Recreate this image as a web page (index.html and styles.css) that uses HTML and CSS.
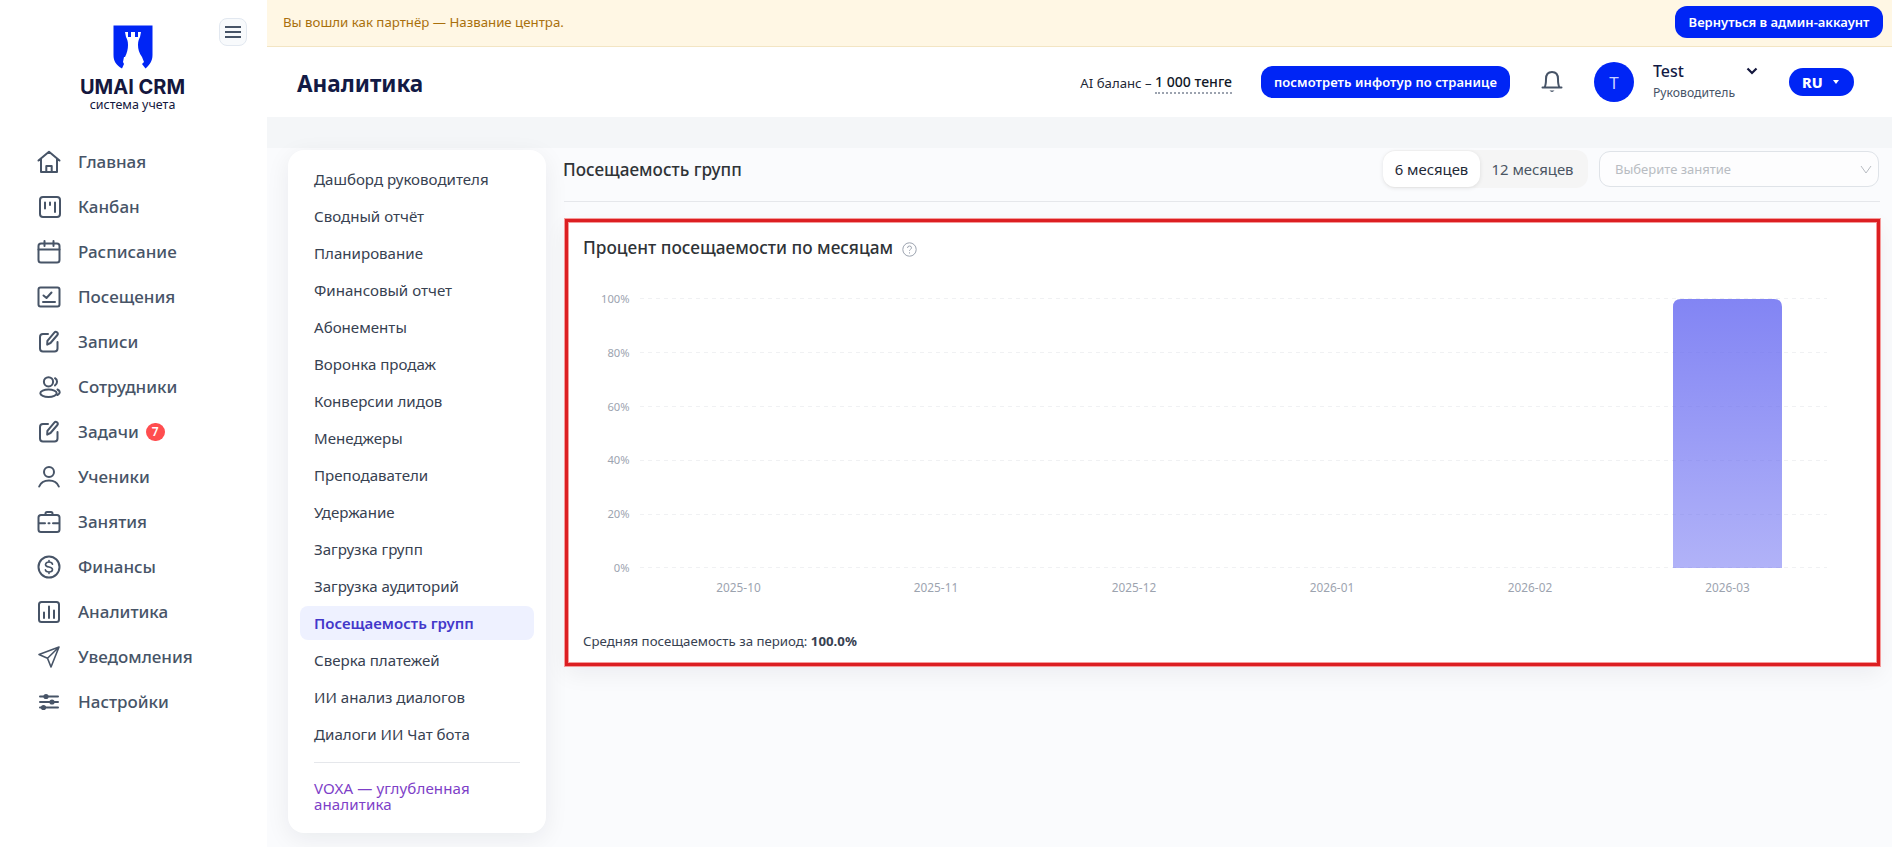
FILE: index.html
```html
<!DOCTYPE html>
<html lang="ru">
<head>
  <meta charset="UTF-8" />
  <meta name="viewport" content="width=device-width, initial-scale=1.0" />
  <title>Аналитика — UMAI CRM</title>
  <link rel="stylesheet" href="styles.css">
</head>
<body>
  <aside class="sidebar">
    <button class="burger" aria-label="Меню">
      <svg width="18" height="14" viewBox="0 0 18 14"><path d="M1 2h16M1 7h16M1 12h16"/></svg>
    </button>
    <div class="logo">
      <svg width="40" height="44" viewBox="0 0 40 44">
        <path fill="#0025f5" d="M0.500 0.500h39V30c0 6-3 10-7 13.500L29 39l2-2-2-5c-3-4-4-8-4-12 0-4 1-6 2-8l1-5h-3v5h-3V7h-4v5h-3V7h-3l1 5c1 2 2 4 2 8 0 4-1 8-3 12l-1 0-1 5 1 2-2 4.500C3 40 .5 36 .5 30z"/>
      </svg>
      <div class="logo-name">UMAI CRM</div>
      <div class="logo-sub">система учета</div>
    </div>
    <nav class="menu">
      <a href="#"><svg viewBox="0 0 24 24"><path d="M1.500 10.500 12 1.800l10.500 8.700M4 9v13h16V9M9.300 22v-6h5.400v6"/></svg>Главная</a>
      <a href="#"><svg viewBox="0 0 24 24"><rect x="3" y="2" width="20" height="20" rx="3"/><path d="M8 7.500v6M13 7.500v2.500M18 7.500v9.500"/></svg>Канбан</a>
      <a href="#"><svg viewBox="0 0 24 24"><rect x="1.500" y="3.500" width="21" height="19" rx="2.500"/><path d="M1.500 9.500h21M7.500 1v5M16.500 1v5"/></svg>Расписание</a>
      <a href="#"><svg viewBox="0 0 24 24"><rect x="1.500" y="2.500" width="21" height="19" rx="2"/><path d="m6.500 10.500 3 2.500 5-5.500M6 17h12"/></svg>Посещения</a>
      <a href="#"><svg viewBox="0 0 24 24"><path d="M11 4H6Q3 4 3 7v11.500q0 3 3 3h11.500q3 0 3-3V12M17.300 2.600q1.200-1.400 2.700-.3 1.400 1.200.4 2.700L13.500 13l-3.300 1.600.2-3.800z"/></svg>Записи</a>
      <a href="#"><svg viewBox="0 0 24 24"><circle cx="11.500" cy="6.800" r="4.600"/><ellipse cx="11.500" cy="18.200" rx="8.200" ry="3.700"/><path d="M18 3.200a4.200 4.200 0 0 1 0 7.200M20.500 14.500c3 1.500 3 4 0 5.500"/></svg>Сотрудники</a>
      <a href="#"><svg viewBox="0 0 24 24"><path d="M11 4H6Q3 4 3 7v11.500q0 3 3 3h11.500q3 0 3-3V12M17.300 2.600q1.200-1.400 2.700-.3 1.400 1.200.4 2.700L13.500 13l-3.300 1.600.2-3.800z"/></svg>Задачи<span class="badge">7</span></a>
      <a href="#"><svg viewBox="0 0 24 24"><circle cx="12" cy="7" r="5"/><path d="M2.200 21.500q2.300-6 9.800-6t9.800 6"/></svg>Ученики</a>
      <a href="#"><svg viewBox="0 0 24 24"><rect x="1.500" y="5" width="21" height="17" rx="2.500"/><path d="M8.500 5V3.500q0-1.500 1.500-1.500h4q1.500 0 1.500 1.500V5M2 13.200h6M11.500 13.200h1M16 13.200h6"/></svg>Занятия</a>
      <a href="#"><svg viewBox="0 0 24 24"><circle cx="12" cy="12" r="10.500"/><path class="thin" d="M15.500 9.200q-.5-2.200-3.500-2.200T8.500 9.400q0 2 3.500 2.600t3.500 2.600q0 2.400-3.500 2.400t-3.600-2.200M12 5.500V7M12 17v1.500"/></svg>Финансы</a>
      <a href="#"><svg viewBox="0 0 24 24"><rect x="2" y="2" width="20" height="20" rx="2.500"/><path d="M7 12.500V18M12 6.500V18M17 10.500V18"/></svg>Аналитика</a>
      <a href="#"><svg viewBox="0 0 24 24"><path class="thin" d="M22 2 2 9.500l8.500 3.800L14 22zM22 2 10.500 13.300"/></svg>Уведомления</a>
      <a href="#"><svg viewBox="0 0 24 24"><path d="M3 6.500h18M3 12h18M3 17.500h18"/><g class="dots"><circle cx="9" cy="6.500" r="2.600"/><circle cx="15" cy="12" r="2.600"/><circle cx="6.500" cy="17.500" r="2.600"/></g></svg>Настройки</a>
    </nav>
  </aside>

  <div class="main">
    <div class="partner-bar">
      <span>Вы вошли как партнёр — Название центра.</span>
      <button class="btn">Вернуться в админ-аккаунт</button>
    </div>

    <header class="topbar">
      <h1>Аналитика</h1>
      <div class="balance">AI баланс – <span>1 000 тенге</span></div>
      <button class="btn tour">посмотреть инфотур по странице</button>
      <svg class="bell" width="22" height="24" viewBox="0 0 22 24"><path d="M1.500 17.500h19M3.500 17.500Q5 15 5 9q0-7 6-7t6 7q0 6 1.500 8.500"/><path d="M8.500 20.500q2.500 2.800 5 0z" fill="#475467" stroke="none"/></svg>
      <div class="avatar">T</div>
      <div class="user">
        <div class="user-name">Test</div>
        <div class="user-role">Руководитель</div>
      </div>
      <svg class="user-arrow" width="12" height="8" viewBox="0 0 12 8"><path d="m1.500 1.500 4.500 4.500 4.500-4.500"/></svg>
      <button class="lang">RU <i></i></button>
    </header>

    <div class="content">
      <div class="submenu">
        <a href="#">Дашборд руководителя</a>
        <a href="#">Сводный отчёт</a>
        <a href="#">Планирование</a>
        <a href="#">Финансовый отчет</a>
        <a href="#">Абонементы</a>
        <a href="#">Воронка продаж</a>
        <a href="#">Конверсии лидов</a>
        <a href="#">Менеджеры</a>
        <a href="#">Преподаватели</a>
        <a href="#">Удержание</a>
        <a href="#">Загрузка групп</a>
        <a href="#">Загрузка аудиторий</a>
        <a href="#" class="active">Посещаемость групп</a>
        <a href="#">Сверка платежей</a>
        <a href="#">ИИ анализ диалогов</a>
        <a href="#">Диалоги ИИ Чат бота</a>
        <hr>
        <a href="#" class="voxa">VOXA — углубленная аналитика</a>
      </div>

      <section class="report">
        <div class="report-head">
          <h2>Посещаемость групп</h2>
          <div class="period">
            <button class="selected">6 месяцев</button>
            <button>12 месяцев</button>
          </div>
          <div class="select">
            <span>Выберите занятие</span>
            <svg width="12" height="9" viewBox="0 0 12 9"><path d="m1 1 5 7 5-7"/></svg>
          </div>
        </div>

        <div class="chart-card">
          <h3>Процент посещаемости по месяцам
            <svg width="15" height="15" viewBox="0 0 15 15"><circle cx="7.500" cy="7.500" r="6.700"/><path d="M5.500 6q0-2 2-2t2 1.800q0 1-1 1.500-1 .6-1 1.500M7.500 10.300v1.200"/></svg>
          </h3>
          <svg class="chart" width="1260" height="330" viewBox="0 0 1260 330">
            <defs>
              <linearGradient id="barFill" x1="0" y1="0" x2="0" y2="1">
                <stop offset="0" stop-color="#6366f1" stop-opacity=".8"/>
                <stop offset="1" stop-color="#6366f1" stop-opacity=".5"/>
              </linearGradient>
            </defs>
            <g class="grid">
              <path d="M56 26.500h1187M56 80.500h1187M56 134.500h1187M56 188.500h1187M56 242.500h1187M56 295.500h1187"/>
            </g>
            <g class="axis-y">
              <text x="45.500" y="31">100%</text>
              <text x="45.500" y="85">80%</text>
              <text x="45.500" y="139">60%</text>
              <text x="45.500" y="192">40%</text>
              <text x="45.500" y="246">20%</text>
              <text x="45.500" y="300">0%</text>
            </g>
            <path fill="url(#barFill)" d="M1089 296V35q0-8 8-8h93q8 0 8 8v261z"/>
            <g class="axis-x">
              <text x="154.500" y="320">2025-10</text>
              <text x="352" y="320">2025-11</text>
              <text x="550" y="320">2025-12</text>
              <text x="748" y="320">2026-01</text>
              <text x="946" y="320">2026-02</text>
              <text x="1143.500" y="320">2026-03</text>
            </g>
          </svg>
          <p>Средняя посещаемость за период: <b>100.0%</b></p>
        </div>
      </section>
    </div>
  </div>
</body>
</html>
```

FILE: styles.css
```css
* {
  box-sizing: border-box;
}
body {
  margin: 0;
  display: flex;
  height: 847px;
  overflow: hidden;
  font-family: "Noto Sans", "Open Sans", sans-serif;
  background: #fff;
  color: #374151;
}
a {
  text-decoration: none;
  color: inherit;
}
button {
  border: none;
  font-family: inherit;
  padding: 0;
}
h1, h2, h3, p {
  margin: 0;
}
svg {
  fill: none;
}

/* sidebar */
.sidebar {
  position: relative;
  width: 267px;
  flex: none;
  padding-top: 25px;
}
.burger {
  position: absolute;
  top: 18px;
  left: 219px;
  width: 28px;
  height: 28px;
  display: flex;
  align-items: center;
  justify-content: center;
  background: #f8fafc;
  border: 1px solid #e2e8f0;
  border-radius: 8px;
}
.burger svg {
  stroke: #475467;
  stroke-width: 2;
}
.logo {
  display: flex;
  flex-direction: column;
  align-items: center;
  padding-right: 2px;
  color: #14173d;
}
.logo-name {
  margin-top: 8px;
  font-family: Inter, sans-serif;
  font-size: 20px;
  line-height: 20px;
  font-weight: 700;
}
.logo-sub {
  font-size: 12.500px;
  line-height: 16px;
}
.menu {
  margin-top: 26px;
}
.menu a {
  display: flex;
  align-items: center;
  height: 45px;
  padding-left: 37px;
  font-size: 17px;
  font-weight: 500;
  color: #475467;
}
.menu svg {
  width: 24px;
  height: 24px;
  margin-right: 17px;
  stroke: #475467;
  stroke-width: 2;
  stroke-linejoin: round;
  stroke-linecap: round;
}
.menu .thin {
  stroke-width: 1.600;
}
.menu .dots {
  fill: #475467;
  stroke: none;
}
.badge {
  width: 19px;
  height: 18px;
  margin-left: 7px;
  border-radius: 9px;
  background: #ff4d4f;
  color: #fff;
  font-size: 12px;
  line-height: 18px;
  font-weight: 600;
  text-align: center;
}

/* top */
.main {
  flex: 1;
  display: flex;
  flex-direction: column;
}
.partner-bar {
  height: 47px;
  flex: none;
  display: flex;
  align-items: center;
  justify-content: space-between;
  padding: 0 9px 2px 16px;
  background: #fff7e4;
  border-bottom: 1px solid #f3e5c3;
  color: #a9700c;
  font-size: 13.250px;
}
.btn {
  height: 32px;
  padding: 0 13.500px;
  border-radius: 12px;
  background: #0025f5;
  color: #fff;
  font-size: 13px;
  font-weight: 600;
}
.topbar {
  height: 70px;
  flex: none;
  display: flex;
  align-items: center;
  padding: 0 38px 0 30px;
  background: #fff;
}
.topbar h1 {
  flex: 1;
  padding-top: 2px;
  font-size: 22.500px;
  font-weight: 700;
  color: #121a45;
}
.balance {
  font-size: 13.200px;
  color: #1f2937;
}
.balance span {
  display: inline-block;
  font-size: 14.100px;
  line-height: 21px;
  vertical-align: 1px;
  font-weight: 500;
  color: #111827;
  border-bottom: 2px dotted #9ca3af;
}
.tour {
  width: 249px;
  margin-left: 29px;
  padding: 0;
  letter-spacing: .07px;
}
.bell {
  margin-left: 31px;
  stroke: #475467;
  stroke-width: 2;
  stroke-linecap: round;
}
.avatar {
  width: 40px;
  height: 40px;
  margin-left: 31px;
  border-radius: 50%;
  background: #0025f5;
  color: #c9d2ff;
  font-size: 17px;
  line-height: 42px;
  text-align: center;
}
.user {
  width: 93px;
  margin: -1px 0 0 19px;
}
.user-name {
  font-size: 16px;
  line-height: 22px;
  font-weight: 500;
  color: #121a45;
}
.user-role {
  font-size: 12.200px;
  line-height: 21px;
  color: #475467;
}
.user-arrow {
  margin: -22px 31px 0 0;
  stroke: #14173d;
  stroke-width: 2.200;
}
.lang {
  display: flex;
  align-items: center;
  width: 65px;
  height: 28px;
  padding-left: 13px;
  border-radius: 14px;
  background: #0025f5;
  color: #fff;
  font-size: 14.500px;
  font-weight: 800;
}
.lang i {
  margin-left: 10px;
  border: 3px solid transparent;
  border-top: 4px solid #fff;
  border-bottom: none;
}

/* content */
.content {
  flex: 1;
  display: flex;
  align-items: flex-start;
  padding: 33px 12px 0 21px;
  background: linear-gradient(#f4f6f8 31px, #fafbfd 31px);
}
.submenu {
  width: 258px;
  height: 683px;
  padding: 12px;
  border-radius: 16px;
  background: #fff;
  box-shadow: 0 6px 24px rgba(15, 23, 42, .07);
}
.submenu a {
  display: block;
  height: 34px;
  margin-bottom: 3px;
  padding-left: 14px;
  border-radius: 8px;
  font-size: 15.100px;
  line-height: 34px;
}
.submenu .active {
  background: #eef1ff;
  color: #4338ca;
  font-size: 15px;
  font-weight: 600;
}
.submenu hr {
  height: 1px;
  margin: 11px 14px 17px;
  border: none;
  background: #e5e7eb;
}
.submenu .voxa {
  line-height: 16px;
  letter-spacing: .1px;
  color: #7e3fc8;
}
.report {
  flex: 1;
  margin-left: 18px;
}
.report-head {
  display: flex;
  align-items: flex-start;
  height: 52px;
  border-bottom: 1px solid #e5e7eb;
}
.report-head h2 {
  flex: 1;
  margin-left: -1px;
  font-size: 17.150px;
  line-height: 39px;
  font-weight: 500;
  color: #2f3337;
}
.period {
  display: flex;
  width: 205px;
  height: 38px;
  margin-right: 11px;
  border-radius: 12px;
  background: #f5f5f5;
}
.period button {
  width: 105px;
  height: 36px;
  margin-top: 1px;
  border-radius: 12px;
  background: none;
  color: #4b5563;
  font-size: 14.900px;
}
.period .selected {
  width: 97px;
  background: #fff;
  color: #1f2937;
  box-shadow: 0 1px 4px rgba(0, 0, 0, .1);
}
.select {
  display: flex;
  align-items: center;
  justify-content: space-between;
  width: 280px;
  height: 36px;
  margin: 1px 1px 0 0;
  padding: 0 6px 0 15px;
  border: 1px solid #dfe3e8;
  border-radius: 11px;
  background: #fdfdfe;
  color: #b8bcc2;
  font-size: 13px;
}
.select svg {
  stroke: #b8bcc2;
}
.chart-card {
  height: 447px;
  margin: 17px 0 0 1px;
  padding: 14px 14px 14px 15px;
  border: 3px solid #dc1f22;
  outline: 1px solid #f59b9b;
  background: #fff;
  box-shadow: inset 0 0 0 1px #f59b9b, 0 8px 22px rgba(15, 23, 42, .06);
}
.chart-card h3 {
  display: flex;
  align-items: center;
  font-size: 17.250px;
  line-height: 24px;
  font-weight: 500;
  color: #2f3337;
}
.chart-card h3 svg {
  margin: 3px 0 0 9px;
  stroke: #9ca3af;
}
.chart {
  display: block;
  margin: 12px 0 0 1px;
}
.chart text {
  font-size: 11.800px;
  fill: #9ca3af;
}
.grid {
  stroke: #f0f1f3;
  stroke-dasharray: 4 4;
}
.chart .axis-y text {
  font-size: 11.200px;
  text-anchor: end;
}
.axis-x {
  text-anchor: middle;
}
.chart-card p {
  margin-top: 29px;
  font-size: 13.250px;
  line-height: 20px;
}
```
